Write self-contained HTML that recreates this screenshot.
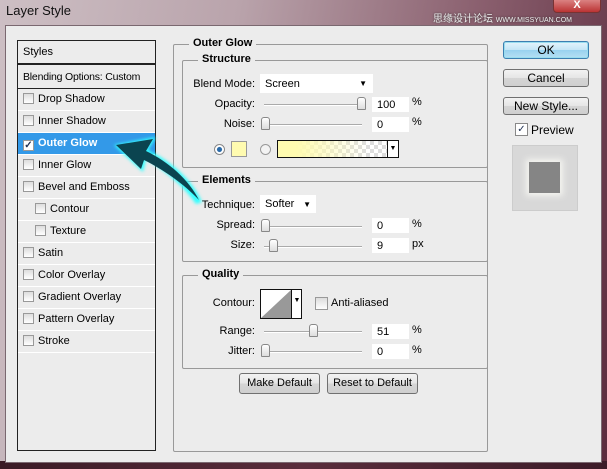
<!DOCTYPE html><html><head><style>
body{margin:0;width:607px;height:469px;overflow:hidden;font-family:Tahoma,"Liberation Sans",sans-serif;font-size:11px;color:#000;position:relative;
background:linear-gradient(100deg,#cdbfc4 0%,#b9a3ab 35%,#8a5f6e 70%,#5b2b3d 100%);}
.a{position:absolute}
.dlg{left:5px;top:25px;width:595px;height:436px;background:#ececec;border:1px solid #7a6870}
.box{position:absolute;border:1px solid #999;border-radius:2px}
.lg{position:absolute;background:#ececec;font-weight:bold;padding:0 4px;font-size:11px}
.lp{left:17px;top:40px;width:137px;height:409px;border:1px solid #222;background:#ececec}
.row{position:absolute;left:0;width:137px;height:21px;border-bottom:1px solid #fff;line-height:21px}
.cb{display:inline-block;width:9px;height:9px;border:1px solid #999;background:linear-gradient(#ddd,#fff);vertical-align:-2px;margin:0 4px 0 5px}
.btn{position:absolute;border:1px solid #707070;border-radius:3px;background:linear-gradient(#f3f3f3 0,#e5e5e5 50%,#d5d5d5 51%,#cfcfcf);text-align:center;font-size:12px}
.inp{position:absolute;background:#fff;height:15px;line-height:16px;padding-left:5px}
.tr{position:absolute;height:1px;background:#aaa;border-bottom:1px solid #fff}
.th{position:absolute;width:7px;height:11px;border:1px solid #888;border-radius:3px 3px 1px 1px;background:linear-gradient(#fff,#ddd)}
.lb{position:absolute;text-align:right}
</style></head><body>
<div class="a" style="left:0;top:461px;width:607px;height:8px;background:linear-gradient(90deg,#3a1a25,#5a2d3c,#3c1b28)"></div>
<div class="a" style="left:6px;top:3px;font-size:13px;color:#111;font-family:'Liberation Sans',sans-serif">Layer Style</div>
<div class="a" style="left:553px;top:-2px;width:46px;height:13px;background:linear-gradient(#d88,#b33);border-radius:0 0 4px 4px;border:1px solid #733;color:#fff;text-align:center;font-weight:bold;font-size:11px;line-height:13px">X</div>
<div class="a" style="left:433px;top:10px;font-size:10px;color:#eee;font-family:'Liberation Sans','Noto Sans CJK SC',sans-serif;text-shadow:0 0 2px #333;white-space:nowrap">思缘设计论坛 <span style="font-size:7px">WWW.MISSYUAN.COM</span></div>
<div class="a dlg"></div>
<div class="a lp">
<div class="row" style="top:0;height:22px;border-bottom:2px solid #222;line-height:22px;padding-left:5px;width:132px">Styles</div>
<div class="row" style="top:25px;height:22px;border-bottom:1px solid #222;line-height:22px;padding-left:5px;width:132px;font-size:10.5px;letter-spacing:-0.2px;white-space:nowrap">Blending Options: Custom</div>
<div class="row" style="top:48px"><span class="cb"></span>Drop Shadow</div>
<div class="row" style="top:70px"><span class="cb"></span>Inner Shadow</div>
<div class="row" style="top:92px;background:#3399e8;color:#fff;font-weight:bold"><span class="cb" style="background:#fff;color:#235;font-size:10px;line-height:9px;text-align:center">✓</span>Outer Glow</div>
<div class="row" style="top:114px"><span class="cb"></span>Inner Glow</div>
<div class="row" style="top:136px"><span class="cb"></span>Bevel and Emboss</div>
<div class="row" style="top:158px;padding-left:12px;width:125px"><span class="cb"></span>Contour</div>
<div class="row" style="top:180px;padding-left:12px;width:125px"><span class="cb"></span>Texture</div>
<div class="row" style="top:202px"><span class="cb"></span>Satin</div>
<div class="row" style="top:224px"><span class="cb"></span>Color Overlay</div>
<div class="row" style="top:246px"><span class="cb"></span>Gradient Overlay</div>
<div class="row" style="top:268px"><span class="cb"></span>Pattern Overlay</div>
<div class="row" style="top:290px"><span class="cb"></span>Stroke</div>
</div>
<div class="box" style="left:173px;top:44px;width:313px;height:406px"></div>
<div class="lg" style="left:189px;top:37px">Outer Glow</div>
<div class="box" style="left:182px;top:60px;width:304px;height:106px"></div>
<div class="lg" style="left:198px;top:53px">Structure</div>
<div class="lb" style="left:190px;top:78px;width:65px">Blend Mode:</div>
<div class="inp" style="left:260px;top:74px;width:108px;height:19px;line-height:20px">Screen<span class="a" style="right:6px;top:0;font-size:8px">▼</span></div>
<div class="lb" style="left:190px;top:98px;width:65px">Opacity:</div>
<div class="tr" style="left:264px;top:104px;width:98px"></div><div class="th" style="left:357px;top:97px"></div>
<div class="inp" style="left:372px;top:97px;width:32px">100</div><div class="a" style="left:412px;top:96px">%</div>
<div class="lb" style="left:190px;top:118px;width:65px">Noise:</div>
<div class="tr" style="left:264px;top:124px;width:98px"></div><div class="th" style="left:261px;top:117px"></div>
<div class="inp" style="left:372px;top:117px;width:32px">0</div><div class="a" style="left:412px;top:116px">%</div>
<div class="a" style="left:214px;top:144px;width:9px;height:9px;border-radius:50%;border:1px solid #888;background:radial-gradient(#2a6aa8 35%,#fff 45%)"></div>
<div class="a" style="left:231px;top:141px;width:14px;height:14px;background:#fffbb0;border:1px solid #999"></div>
<div class="a" style="left:260px;top:144px;width:9px;height:9px;border-radius:50%;border:1px solid #999;background:#f3f3f3"></div>
<div class="a" style="left:277px;top:140px;width:120px;height:16px;border:1px solid #111;background:linear-gradient(90deg,#fffbb0 15%,rgba(255,251,176,0) 75%),repeating-conic-gradient(#ddd 0 25%,#fff 0 50%) 0 0/8px 8px"><div class="a" style="right:0;top:0;width:10px;height:16px;border-left:1px solid #111;background:#fff;font-size:7px;text-align:center;line-height:16px">▼</div></div>
<div class="box" style="left:182px;top:181px;width:304px;height:79px"></div>
<div class="lg" style="left:198px;top:174px">Elements</div>
<div class="lb" style="left:190px;top:199px;width:65px">Technique:</div>
<div class="inp" style="left:260px;top:195px;width:51px;height:18px;line-height:19px">Softer<span class="a" style="right:5px;top:0;font-size:8px">▼</span></div>
<div class="lb" style="left:190px;top:219px;width:65px">Spread:</div>
<div class="tr" style="left:264px;top:226px;width:98px"></div><div class="th" style="left:261px;top:219px"></div>
<div class="inp" style="left:372px;top:218px;width:32px">0</div><div class="a" style="left:412px;top:218px">%</div>
<div class="lb" style="left:190px;top:239px;width:65px">Size:</div>
<div class="tr" style="left:264px;top:246px;width:98px"></div><div class="th" style="left:269px;top:239px"></div>
<div class="inp" style="left:372px;top:238px;width:32px">9</div><div class="a" style="left:412px;top:238px">px</div>
<div class="box" style="left:182px;top:275px;width:304px;height:92px"></div>
<div class="lg" style="left:198px;top:268px">Quality</div>
<div class="lb" style="left:190px;top:297px;width:65px">Contour:</div>
<div class="a" style="left:260px;top:289px;width:40px;height:28px;border:1px solid #111;background:#fff;overflow:hidden">
<svg width="30" height="28" class="a" style="left:0;top:0"><polygon points="0,28 30,0 30,28" fill="#999"/></svg>
<div class="a" style="left:30px;top:0;width:10px;height:28px;border-left:1px solid #111;font-size:7px;text-align:center;line-height:22px">▼</div></div>
<div class="a" style="left:315px;top:297px;width:11px;height:11px;border:1px solid #999;background:linear-gradient(#ddd,#fff)"></div>
<div class="a" style="left:331px;top:297px">Anti-aliased</div>
<div class="lb" style="left:190px;top:325px;width:65px">Range:</div>
<div class="tr" style="left:264px;top:331px;width:98px"></div><div class="th" style="left:309px;top:324px"></div>
<div class="inp" style="left:372px;top:324px;width:32px">51</div><div class="a" style="left:412px;top:324px">%</div>
<div class="lb" style="left:190px;top:345px;width:65px">Jitter:</div>
<div class="tr" style="left:264px;top:351px;width:98px"></div><div class="th" style="left:261px;top:344px"></div>
<div class="inp" style="left:372px;top:344px;width:32px">0</div><div class="a" style="left:412px;top:344px">%</div>
<div class="btn" style="left:239px;top:373px;width:79px;height:19px;line-height:19px;font-size:11px">Make Default</div>
<div class="btn" style="left:327px;top:373px;width:89px;height:19px;line-height:19px;font-size:11px">Reset to Default</div>
<div class="btn" style="left:503px;top:41px;width:84px;height:16px;line-height:16px;border-color:#3c7fb1;background:linear-gradient(#e5f4fc,#c4e5f6 50%,#98d1ef 51%,#b6e0f4);box-shadow:0 0 0 1px #9de inset">OK</div>
<div class="btn" style="left:503px;top:69px;width:84px;height:16px;line-height:16px">Cancel</div>
<div class="btn" style="left:503px;top:97px;width:84px;height:16px;line-height:16px">New Style...</div>
<div class="a" style="left:515px;top:123px;width:11px;height:11px;border:1px solid #888;background:#fff;color:#235;font-size:10px;line-height:11px;text-align:center">✓</div>
<div class="a" style="left:531px;top:123px;font-size:12px">Preview</div>
<div class="a" style="left:512px;top:145px;width:64px;height:64px;background:#d8d8d8;border:1px solid #ccc"></div>
<div class="a" style="left:529px;top:162px;width:31px;height:31px;background:#858585;box-shadow:0 0 6px 3px #f4f4f0"></div>
<svg class="a" style="left:0;top:0" width="607" height="469">
<defs><filter id="g"><feGaussianBlur stdDeviation="1.5"/></filter></defs>
<path d="M114,145 L156,137 L148,150 C172,162 192,180 202,202 L196,204 C184,186 164,170 146,159 L143,172 Z" fill="#3ff" filter="url(#g)"/>
<path d="M116,145 L153,139 L146,151 C169,162 189,180 199,200 C184,184 164,170 144,160 L141,169 Z" fill="#0b4450"/>
</svg>
</body></html>
